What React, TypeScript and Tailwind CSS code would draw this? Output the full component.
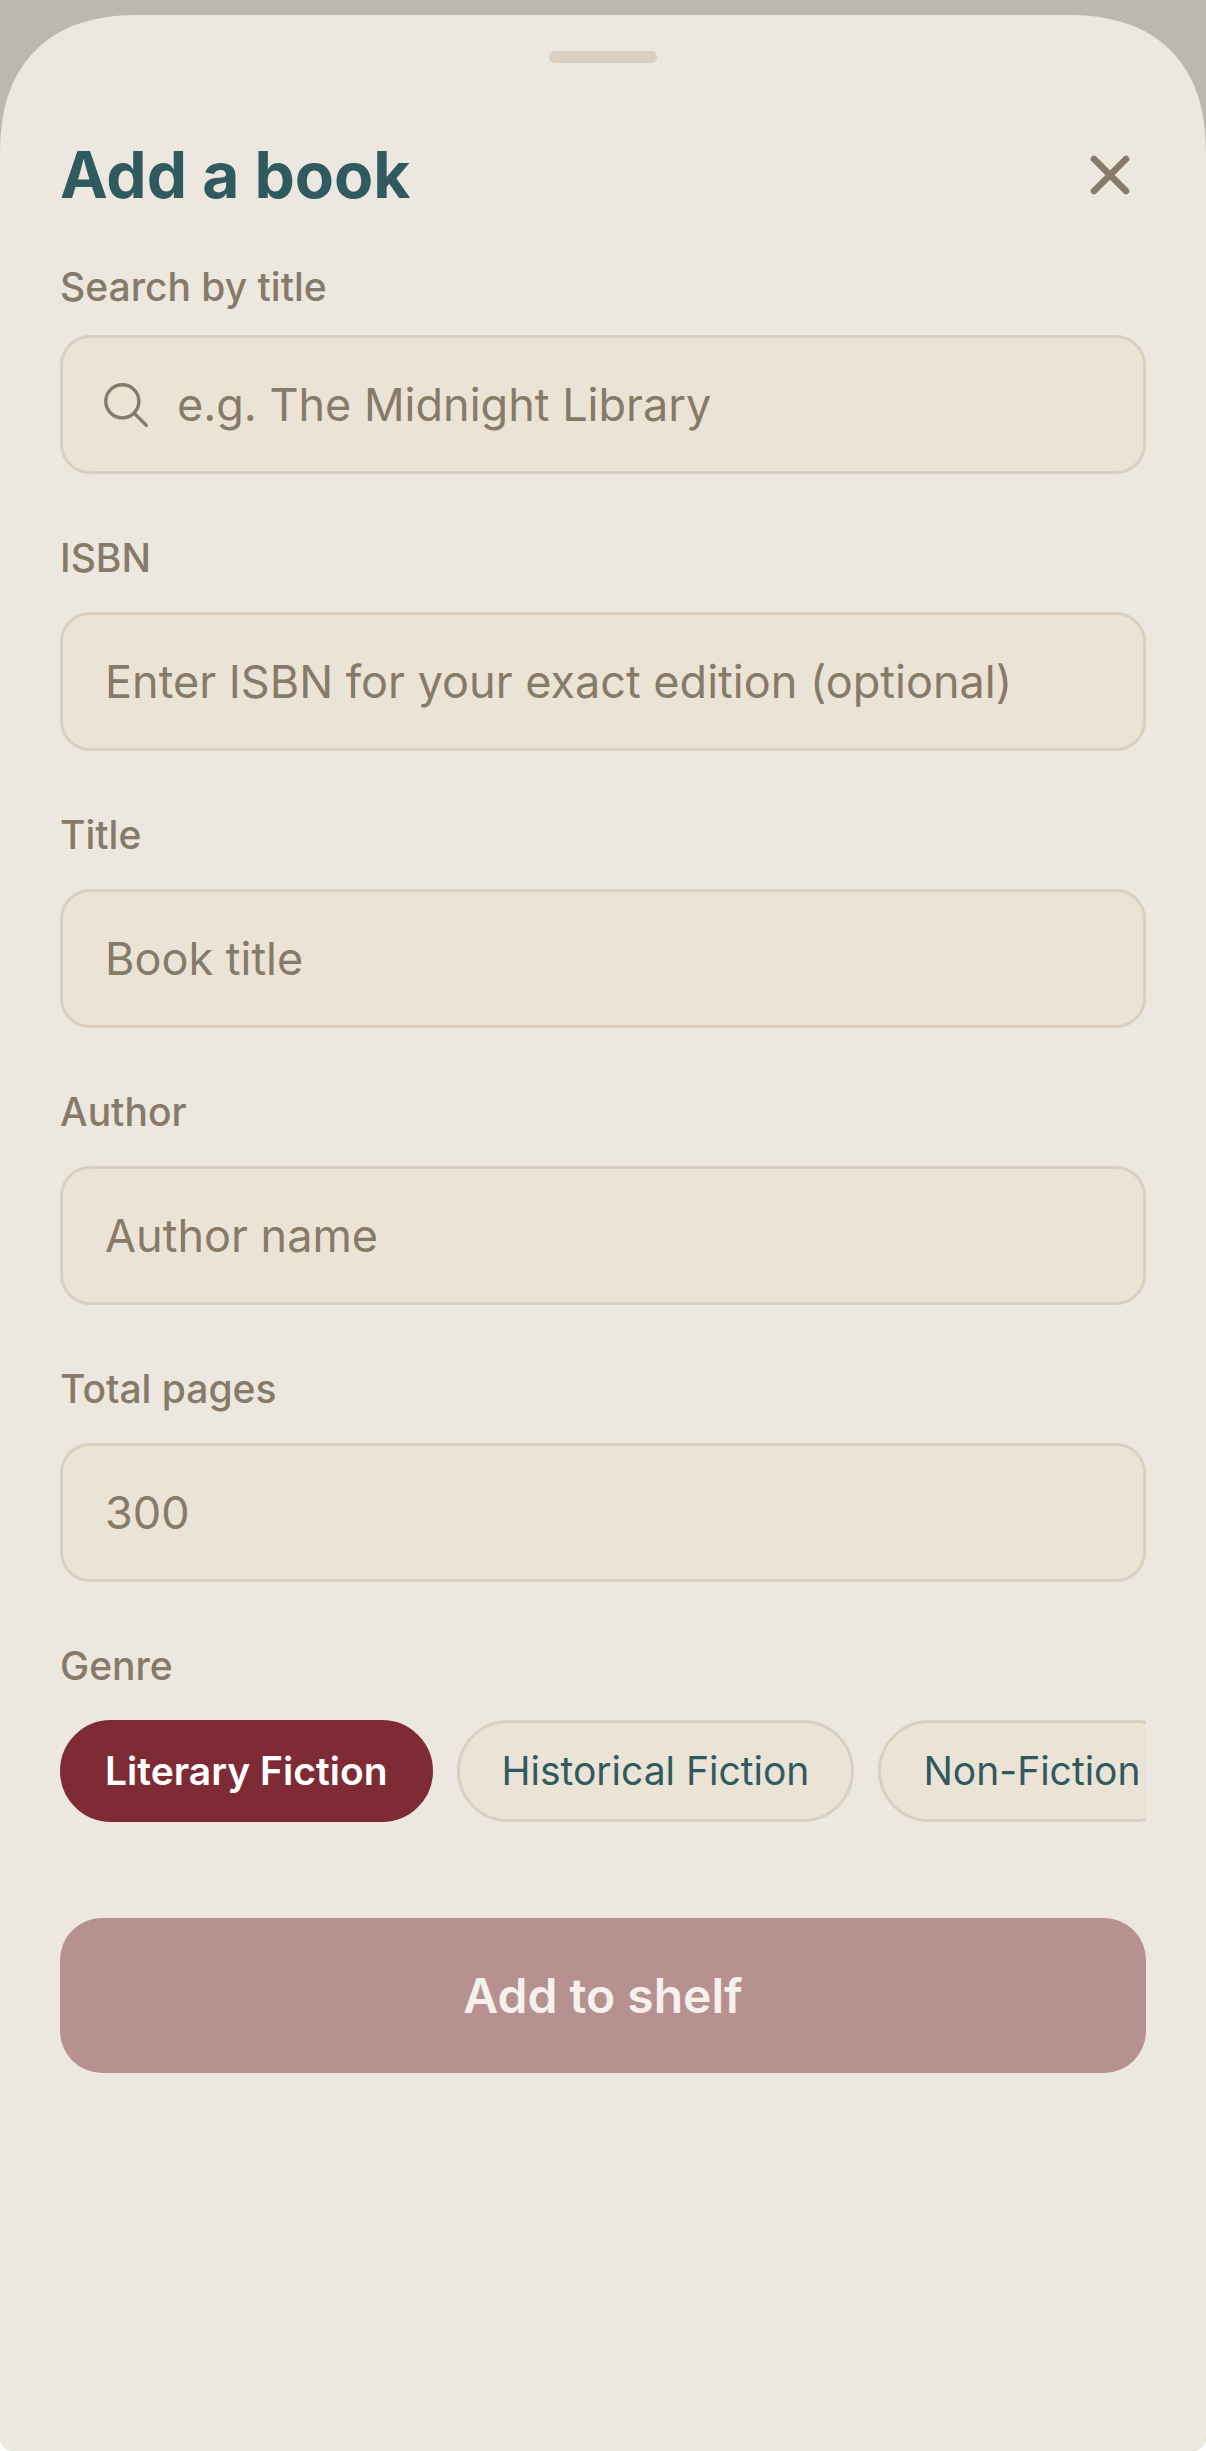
import { useState } from "react";

const fields = [
  {
    id: "isbn",
    label: "ISBN",
    placeholder: "Enter ISBN for your exact edition (optional)",
  },
  { id: "title", label: "Title", placeholder: "Book title" },
  { id: "author", label: "Author", placeholder: "Author name" },
  { id: "pages", label: "Total pages", placeholder: "300" },
];

const genres = ["Literary Fiction", "Historical Fiction", "Non-Fiction"];

const SearchIcon = () => (
  <svg
    viewBox="0 0 512 512"
    className="size-[54px] shrink-0"
    fill="none"
    stroke="currentColor"
    strokeWidth="32"
    strokeLinecap="round"
    aria-hidden="true"
  >
    <circle cx="221.09" cy="221.09" r="157.09" />
    <path d="M338.29 338.29 448 448" />
  </svg>
);

const CloseIcon = () => (
  <svg
    viewBox="0 0 24 24"
    className="size-16"
    fill="none"
    stroke="currentColor"
    strokeWidth="2.5"
    strokeLinecap="round"
    aria-hidden="true"
  >
    <path d="M18 6 6 18M6 6l12 12" />
  </svg>
);

const Field = ({
  id,
  label,
  placeholder,
}: {
  id: string;
  label: string;
  placeholder: string;
}) => (
  <div className="flex flex-col gap-[30px]">
    <label htmlFor={id} className="text-[39px] leading-12 font-medium">
      {label}
    </label>
    <input
      id={id}
      type="text"
      inputMode={id === "pages" ? "numeric" : "text"}
      placeholder={placeholder}
      className="h-[139px] w-full rounded-[30px] border-3 border-[#dacfc1] bg-[#ebe3d6] px-[42px] text-[45px] outline-none placeholder:text-[#887a68]"
    />
  </div>
);

export default function App() {
  const [genre, setGenre] = useState(genres[0]);

  return (
    <div className="min-h-screen bg-white font-['Inter',sans-serif] text-[#887a68]">
      <div className="flex min-h-screen flex-col overflow-hidden rounded-b-[14px] bg-[#bbb8b1] pt-[15px]">
        <main className="flex flex-1 flex-col rounded-t-[140px] bg-[#ece7df] px-15 pt-9 [corner-shape:superellipse(1.25)]">
          {/* drag handle */}
          <div className="h-3 w-27 self-center rounded-full bg-[#dacfc1]" />

          <header className="mt-18 flex items-center justify-between">
            <h1 className="text-[64px] leading-20 font-bold text-[#2f5a5f]">
              Add a book
            </h1>
            <button
              type="button"
              aria-label="Close"
              className="flex size-18 items-center justify-center"
            >
              <CloseIcon />
            </button>
          </header>

          <form
            className="mt-12 flex flex-col gap-15"
            onSubmit={(e) => e.preventDefault()}
          >
            <div className="flex flex-col gap-6">
              <label
                htmlFor="search"
                className="text-[39px] leading-12 font-medium"
              >
                Search by title
              </label>
              <div className="flex h-[139px] items-center gap-6 rounded-[30px] border-3 border-[#dacfc1] bg-[#ebe3d6] px-9">
                <SearchIcon />
                <input
                  id="search"
                  type="text"
                  placeholder="e.g. The Midnight Library"
                  className="min-w-0 flex-1 bg-transparent text-[45px] outline-none placeholder:text-[#887a68]"
                />
              </div>
            </div>

            {fields.map((field) => (
              <Field key={field.id} {...field} />
            ))}

            <div className="flex flex-col gap-[30px]">
              <span id="genre" className="text-[39px] leading-12 font-medium">
                Genre
              </span>
              <div
                role="group"
                aria-labelledby="genre"
                className="flex gap-6 overflow-x-auto [scrollbar-width:none]"
              >
                {genres.map((name) => (
                  <button
                    key={name}
                    type="button"
                    aria-pressed={genre === name}
                    onClick={() => setGenre(name)}
                    className={`h-[102px] shrink-0 rounded-full border-3 px-[42px] text-[39px] whitespace-nowrap ${
                      genre === name
                        ? "border-[#7e2b35] bg-[#7e2b35] font-semibold text-white"
                        : "border-[#dacfc1] bg-[#ebe3d6] text-[#2f5a5f]"
                    }`}
                  >
                    {name}
                  </button>
                ))}
              </div>
            </div>

            <button
              type="submit"
              className="mt-9 h-[155px] rounded-[42px] bg-[#b79190] text-[48px] font-semibold text-[#f6f1ed]"
            >
              Add to shelf
            </button>
          </form>
        </main>
      </div>
    </div>
  );
}
